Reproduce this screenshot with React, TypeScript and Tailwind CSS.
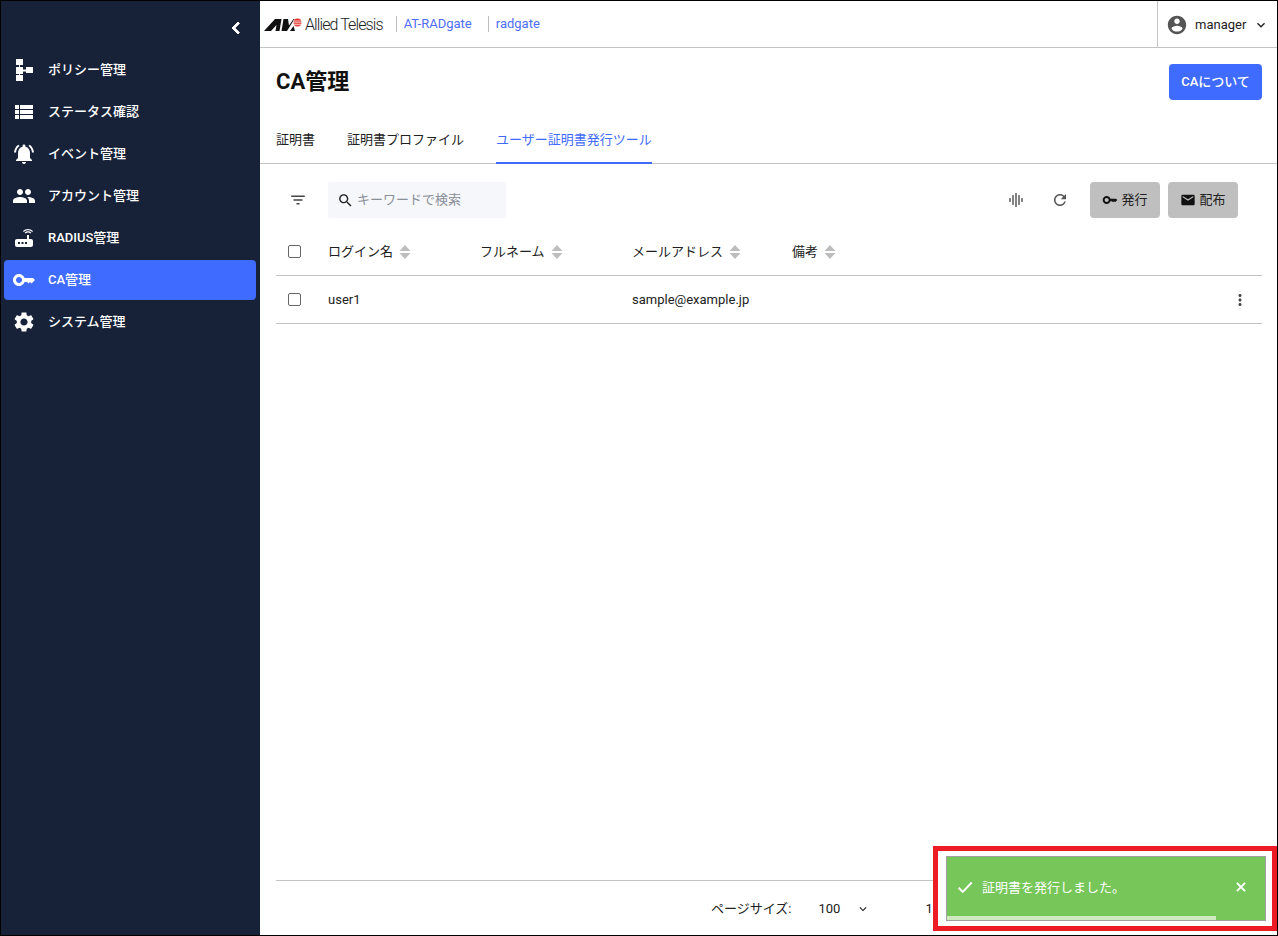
const P = {
  list: "M3 14h4v-4H3v4zm0 5h4v-4H3v4zM3 9h4V5H3v4zm5 5h13v-4H8v4zm0 5h13v-4H8v4zM8 5v4h13V5H8z",
  bell: "M7.58 4.08L6.15 2.65C3.75 4.48 2.17 7.3 2.03 10.5h2c.15-2.65 1.51-4.97 3.55-6.42zm12.39 6.42h2c-.15-3.2-1.73-6.02-4.12-7.85l-1.42 1.43c2.02 1.45 3.39 3.77 3.54 6.42zM18 11c0-3.07-1.64-5.64-4.5-6.32V4c0-.83-.67-1.5-1.5-1.5s-1.5.67-1.5 1.5v.68C7.63 5.36 6 7.92 6 11v5l-2 2v1h16v-1l-2-2v-5zm-6 11c.14 0 .27-.01.4-.04.65-.14 1.18-.58 1.44-1.18.1-.24.15-.5.15-.78h-4c.01 1.1.9 2 2.01 2z",
  people: "M16 11c1.66 0 2.99-1.34 2.99-3S17.66 5 16 5c-1.66 0-3 1.34-3 3s1.34 3 3 3zm-8 0c1.66 0 2.99-1.34 2.99-3S9.66 5 8 5C6.34 5 5 6.34 5 8s1.34 3 3 3zm0 2c-2.33 0-7 1.17-7 3.5V19h14v-2.5c0-2.33-4.67-3.5-7-3.5zm8 0c-.29 0-.62.02-.97.05 1.16.84 1.97 1.97 1.97 3.45V19h6v-2.5c0-2.33-4.67-3.5-7-3.5z",
  router: "M20.2 5.9l.8-.8C19.6 3.7 17.8 3 16 3s-3.6.7-5 2.1l.8.8C13 4.8 14.5 4.2 16 4.2s3 .6 4.2 1.7zm-.9.8c-.9-.9-2.1-1.4-3.3-1.4s-2.4.5-3.3 1.4l.8.8c.7-.7 1.6-1 2.5-1 .9 0 1.8.3 2.5 1l.8-.8zM19 13h-2V9h-2v4H5c-1.1 0-2 .9-2 2v4c0 1.1.9 2 2 2h14c1.1 0 2-.9 2-2v-4c0-1.1-.9-2-2-2zM8 18H6v-2h2v2zm3.5 0h-2v-2h2v2zm3.5 0h-2v-2h2v2z",
  key: "M12.65 10C11.83 7.67 9.61 6 7 6c-3.31 0-6 2.69-6 6s2.69 6 6 6c2.61 0 4.83-1.67 5.65-4H15l1.5 1.5L18 14l1.5 1.5L23 12l-2-2H12.65zM7 15c-1.66 0-3-1.34-3-3s1.34-3 3-3 3 1.34 3 3-1.34 3-3 3z",
  settings: "M19.14 12.94c.04-.3.06-.61.06-.94 0-.32-.02-.64-.07-.94l2.03-1.58c.18-.14.23-.41.12-.61l-1.92-3.32c-.12-.22-.37-.29-.59-.22l-2.39.96c-.5-.38-1.03-.7-1.62-.94l-.36-2.54c-.04-.24-.24-.41-.48-.41h-3.84c-.24 0-.43.17-.47.41l-.36 2.54c-.59.24-1.13.57-1.62.94l-2.39-.96c-.22-.08-.47 0-.59.22L2.74 8.87c-.12.21-.08.47.12.61l2.03 1.58c-.05.3-.09.63-.09.94s.02.64.07.94l-2.03 1.58c-.18.14-.23.41-.12.61l1.92 3.32c.12.22.37.29.59.22l2.39-.96c.5.38 1.03.7 1.62.94l.36 2.54c.05.24.24.41.48.41h3.84c.24 0 .44-.17.47-.41l.36-2.54c.59-.24 1.13-.56 1.62-.94l2.39.96c.22.08.47 0 .59-.22l1.92-3.32c.12-.22.07-.47-.12-.61l-2.01-1.58zM12 15.6c-1.98 0-3.6-1.62-3.6-3.6s1.62-3.6 3.6-3.6 3.6 1.62 3.6 3.6-1.62 3.6-3.6 3.6z",
  policy: "M4 1h7v6H8v2h3v2.5h3V9h7v6h-7v-1.5h-3V16H8v1h3v6H4v-6h3v-1H4V9h3V7H4V1z",
  account: "M12 2C6.48 2 2 6.48 2 12s4.48 10 10 10 10-4.48 10-10S17.52 2 12 2zm0 3c1.66 0 3 1.34 3 3s-1.34 3-3 3-3-1.34-3-3 1.34-3 3-3zm0 14.2c-2.5 0-4.71-1.28-6-3.22.03-1.99 4-3.08 6-3.08 1.99 0 5.97 1.09 6 3.08-1.29 1.94-3.5 3.22-6 3.22z",
  refresh: "M17.65 6.35C16.2 4.9 14.21 4 12 4c-4.42 0-7.99 3.58-7.99 8s3.57 8 7.99 8c3.73 0 6.84-2.55 7.73-6h-2.08c-.82 2.33-3.04 4-5.65 4-3.31 0-6-2.69-6-6s2.69-6 6-6c1.66 0 3.14.69 4.22 1.78L13 11h7V4l-2.35 2.35z",
  filter: "M10 18h4v-2h-4v2zM3 6v2h18V6H3zm3 7h12v-2H6v2z",
  search: "M15.5 14h-.79l-.28-.27C15.41 12.59 16 11.11 16 9.5 16 5.91 13.09 3 9.5 3S3 5.91 3 9.5 5.91 16 9.5 16c1.61 0 3.09-.59 4.23-1.57l.27.28v.79l5 4.99L20.49 19l-4.99-5zm-6 0C7.01 14 5 11.99 5 9.5S7.01 5 9.5 5 14 7.01 14 9.5 11.99 14 9.5 14z",
  mail: "M20 4H4c-1.1 0-1.99.9-1.99 2L2 18c0 1.1.9 2 2 2h16c1.1 0 2-.9 2-2V6c0-1.1-.9-2-2-2zm0 4l-8 5-8-5V6l8 5 8-5v2z",
  more: "M12 8c1.1 0 2-.9 2-2s-.9-2-2-2-2 .9-2 2 .9 2 2 2zm0 2c-1.1 0-2 .9-2 2s.9 2 2 2 2-.9 2-2-.9-2-2-2zm0 6c-1.1 0-2 .9-2 2s.9 2 2 2 2-.9 2-2-.9-2-2-2z",
  down: "M16.59 8.59L12 13.17 7.41 8.59 6 10l6 6 6-6z",
  left: "M15.41 7.41L14 6l-6 6 6 6 1.41-1.41L10.83 12z",
  wave: "M1.8 9h2.4v6H1.8zM6.3 4.5h2.4v15H6.3zM10.8 1.5h2.4v21h-2.4zM15.3 4.5h2.4v15h-2.4zM19.8 9h2.4v6h-2.4z",
};

function Icon({ d, className }: { d: string; className: string }) {
  return (
    <svg viewBox="0 0 24 24" fill="currentColor" className={className}>
      <path d={d} />
    </svg>
  );
}

const menu = [
  { label: "ポリシー管理", icon: P.policy },
  { label: "ステータス確認", icon: P.list },
  { label: "イベント管理", icon: P.bell },
  { label: "アカウント管理", icon: P.people },
  { label: "RADIUS管理", icon: P.router },
  { label: "CA管理", icon: P.key, active: true },
  { label: "システム管理", icon: P.settings },
];

const columns = [
  { label: "ログイン名", w: "w-[152px]" },
  { label: "フルネーム", w: "w-[152px]" },
  { label: "メールアドレス", w: "w-[160px]" },
  { label: "備考", w: "w-[100px]" },
];

function Sort() {
  return (
    <svg viewBox="0 0 12 16" className="ml-[6px] h-[16px] w-[12px] text-[#bdbdbd]" fill="currentColor">
      <path d="M6 1l5.5 6H.5zM6 15L.5 9h11z" />
    </svg>
  );
}

function Box() {
  return <span className="block h-[13px] w-[13px] rounded-[2px] border border-[#666]" />;
}

function Logo() {
  return (
    <div className="flex items-center">
      <svg viewBox="0 0 38 13" className="h-[13px] w-[38px]">
        <path d="M0 13 11 1h6.5L15.5 13h-4l1-6L7 13z" fill="#111" />
        <path d="M17.5 13 19.5 1h4.5l1 6.5L29.5 1h1L23 13z" fill="#111" />
        <path d="M26 13l3.5-5 1.5 5z" fill="#111" />
        <circle cx="33.5" cy="4.5" r="4" fill="#e4322b" />
        <path d="M29 3h9M29 4.8h9M29 6.6h9" stroke="#fff" strokeWidth="0.7" />
      </svg>
      <span className="ml-[3px] pt-[1px] text-[16px] font-light tracking-[-0.9px] text-[#222]">Allied Telesis</span>
    </div>
  );
}

export default function App() {
  return (
    <div
      className="relative flex h-[936px] w-[1278px] overflow-hidden border border-black bg-white text-[13px] text-[#212121]"
      style={{ fontFamily: 'Roboto, "Noto Sans CJK JP", sans-serif' }}
    >
      <aside className="w-[259px] shrink-0 bg-[#172239] pl-[3px] pr-[4px] text-white">
        <div className="flex h-[48px] items-center justify-end pr-[8px] pt-[6px]">
          <Icon d={P.left} className="h-[24px] w-[24px] stroke-white stroke-[1] text-white" />
        </div>
        <nav>
          {menu.map((m) => (
            <div key={m.label} className="flex h-[42px] items-center">
              <div
                className={
                  m.active
                    ? "flex h-[40px] w-full items-center rounded-[4px] bg-[#3f6bff] pl-[8px]"
                    : "flex h-[40px] w-full items-center pl-[8px]"
                }
              >
                <Icon d={m.icon} className="h-[24px] w-[24px]" />
                <span className="ml-[12px] text-[13px] font-medium">{m.label}</span>
              </div>
            </div>
          ))}
        </nav>
      </aside>

      <main className="flex min-w-0 flex-1 flex-col">
        <header className="flex h-[47px] shrink-0 items-center border-b border-[#c4c4c4]">
          <div className="ml-[4px]">
            <Logo />
          </div>
          <div className="ml-[13px] border-l border-[#bdbdbd] pl-[7px] text-[13px] leading-[16px] text-[#4f6ef7]">AT-RADgate</div>
          <div className="ml-[16px] border-l border-[#bdbdbd] pl-[7px] text-[13px] leading-[16px] text-[#4f6ef7]">radgate</div>
          <div className="ml-auto flex h-full w-[120px] items-center border-l border-[#c4c4c4] pl-[8px] pt-[1px]">
            <Icon d={P.account} className="h-[22px] w-[22px] text-[#555]" />
            <span className="ml-[7px] text-[13px]">manager</span>
            <Icon d={P.down} className="ml-[7px] h-[16px] w-[16px]" />
          </div>
        </header>

        <div className="flex h-[72px] shrink-0 items-start justify-between pl-[16px] pr-[15px] pt-[16px]">
          <h1 className="text-[22px] font-bold leading-[36px] text-[#111]">CA管理</h1>
          <button className="h-[36px] w-[93px] rounded-[4px] bg-[#3f6bff] text-[13px] font-medium text-white">CAについて</button>
        </div>

        <div className="flex h-[44px] shrink-0 gap-[32px] border-b border-[#c4c4c4] px-[16px] text-[13px]">
          <div className="flex items-center pb-[3px]">証明書</div>
          <div className="flex items-center pb-[3px]">証明書プロファイル</div>
          <div className="-mb-px flex items-center border-b-2 border-[#3f6bff] pb-[2px] text-[#3f6bff]">ユーザー証明書発行ツール</div>
        </div>

        <div className="mt-[18px] flex h-[36px] shrink-0 items-center pl-[29px] pr-[39px]">
          <Icon d={P.filter} className="h-[18px] w-[18px] text-[#444]" />
          <div className="ml-[21px] flex h-[36px] w-[178px] items-center rounded-[2px] bg-[#f5f7fa] pl-[9px] text-[13px] text-[#8a8f98]">
            <Icon d={P.search} className="mr-[3px] h-[17px] w-[17px] text-[#222]" />
            キーワードで検索
          </div>
          <Icon d={P.wave} className="ml-auto h-[16px] w-[16px] text-[#666]" />
          <Icon d={P.refresh} className="ml-[27px] h-[18px] w-[18px] text-[#555]" />
          <button className="ml-[21px] flex h-[36px] w-[70px] items-center justify-center rounded-[4px] bg-[#bfbfbf] text-[13px]">
            <Icon d={P.key} className="mr-[3px] h-[16px] w-[16px] text-[#111]" />
            発行
          </button>
          <button className="ml-[8px] flex h-[36px] w-[70px] items-center justify-center rounded-[4px] bg-[#bfbfbf] text-[13px]">
            <Icon d={P.mail} className="mr-[3px] h-[16px] w-[16px] text-[#111]" />
            配布
          </button>
        </div>

        <div className="ml-[16px] mr-[15px] flex-1">
          <div className="mt-[10px] flex h-[48px] items-center border-b border-[#c4c4c4]">
            <div className="w-[52px] pl-[12px]">
              <Box />
            </div>
            {columns.map((c) => (
              <div key={c.label} className={`flex items-center ${c.w}`}>
                {c.label}
                <Sort />
              </div>
            ))}
          </div>
          <div className="flex h-[48px] items-center border-b border-[#c4c4c4] text-[13px]">
            <div className="w-[52px] pl-[12px]">
              <Box />
            </div>
            <div className="w-[152px]">user1</div>
            <div className="w-[152px]" />
            <div className="w-[160px]">sample@example.jp</div>
            <Icon d={P.more} className="ml-auto mr-[13px] h-[18px] w-[18px] text-[#444]" />
          </div>
        </div>

        <footer className="ml-[16px] mr-[15px] flex h-[55px] shrink-0 items-center border-t border-[#c4c4c4] pl-[435px] pt-[1px] text-[13px]">
          <span>ページサイズ:</span>
          <span className="ml-[27px]">100</span>
          <Icon d={P.down} className="ml-[16px] h-[14px] w-[14px]" />
          <span className="ml-[55px]">1 - 1 / 1</span>
        </footer>
      </main>

      <div className="absolute bottom-[4px] right-0 h-[85px] w-[344px] border-[5px] border-[#ed1c24] bg-white py-[5px] pl-[8px] pr-[6px]">
        <div className="relative flex h-full items-center border border-[#a0a0a0] bg-[#76c659] pb-[4px] pl-[9px] text-[13px] text-white">
          <svg viewBox="0 0 24 24" className="h-[18px] w-[18px]" fill="none" stroke="currentColor" strokeWidth="2.6">
            <path d="M3.5 13 9 18.5 21 6" />
          </svg>
          <span className="ml-[8px] pt-[2px]">証明書を発行しました。</span>
          <svg viewBox="0 0 24 24" className="ml-auto mr-[17px] h-[14px] w-[14px]" fill="none" stroke="currentColor" strokeWidth="3.4">
            <path d="M5 5l14 14M19 5 5 19" />
          </svg>
          <div className="absolute bottom-0 left-0 h-[4px] w-[269px] bg-[#cfeabf]" />
        </div>
      </div>
    </div>
  );
}
